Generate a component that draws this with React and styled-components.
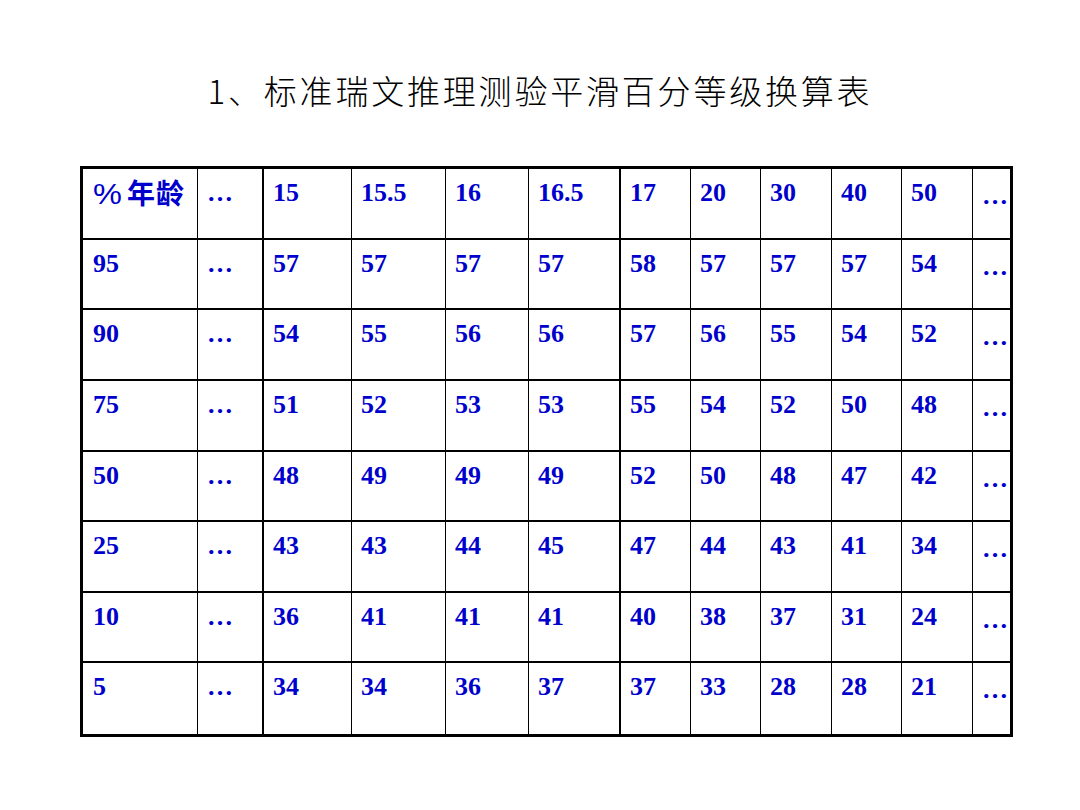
import React from "react";
import styled, { createGlobalStyle } from "styled-components";

const GlobalStyle = createGlobalStyle`
  html, body {
    margin: 0;
    padding: 0;
    background: #ffffff;
  }
`;

const Page = styled.div`
  width: 1080px;
  height: 810px;
  display: flex;
  flex-direction: column;
  align-items: flex-start;
`;

const Title = styled.h1`
  align-self: stretch;
  margin: 70px 0 0;
  height: 40px;
  line-height: 40px;
  text-align: center;
  font-family: "Noto Sans CJK SC", sans-serif;
  font-weight: 300;
  font-size: 33px;
  letter-spacing: 2.8px;
  color: #000000;
`;

const Grid = styled.div`
  box-sizing: border-box;
  margin: 56px 0 0 80px;
  width: 933px;
  height: 571px;
  border: 3px solid #000;
  display: grid;
  grid-template-columns: 115px 66px 88px 94px 83px 92px 70px 70px 71px 70px 71px 1fr;
  grid-template-rows: repeat(8, 1fr);
`;

const Cell = styled.div`
  box-sizing: border-box;
  border-right: ${(p) => (p.$last ? "none" : `${p.$thick ? 2 : 1}px solid #000`)};
  border-bottom: ${(p) => (p.$bottom ? "none" : "2px solid #000")};
  padding: ${(p) => (p.$low ? "12px" : "9px")} 0 0 ${(p) => (p.$first ? "10px" : "9px")};
  font-family: "Liberation Serif", "Noto Sans CJK SC", serif;
  font-weight: 700;
  font-size: 26px;
  line-height: 30px;
  color: #0000cc;
  white-space: nowrap;
`;

const CjkLabel = styled.span`
  font-family: "Noto Sans CJK SC", sans-serif;
  font-weight: 700;
  font-size: 28px;
  letter-spacing: 1px;
  position: relative;
  top: -1px;
`;

const Pct = styled.span`
  display: inline-block;
  width: 34px;
  font-family: "Liberation Sans", sans-serif;
  font-weight: 400;
  font-size: 29px;
  transform: scaleX(1.12);
  transform-origin: left center;
`;

const header = [
  <CjkLabel key="h">
    <Pct>%</Pct>年龄
  </CjkLabel>,
  "…", "15", "15.5", "16", "16.5", "17", "20", "30", "40", "50", "…",
];

const rows = [
  ["95", "57", "57", "57", "57", "58", "57", "57", "57", "54"],
  ["90", "54", "55", "56", "56", "57", "56", "55", "54", "52"],
  ["75", "51", "52", "53", "53", "55", "54", "52", "50", "48"],
  ["50", "48", "49", "49", "49", "52", "50", "48", "47", "42"],
  ["25", "43", "43", "44", "45", "47", "44", "43", "41", "34"],
  ["10", "36", "41", "41", "41", "40", "38", "37", "31", "24"],
  ["5", "34", "34", "36", "37", "37", "33", "28", "28", "21"],
];

const allRows = [header, ...rows.map((r) => [r[0], "…", ...r.slice(1), "…"])];

export default function App() {
  return (
    <Page>
      <GlobalStyle />
      <Title>1、标准瑞文推理测验平滑百分等级换算表</Title>
      <Grid>
        {allRows.map((row, ri) =>
          row.map((text, ci) => (
            <Cell
              key={`${ri}-${ci}`}
              $first={ci === 0}
              $thick={ci === 1 || ci === 5}
              $last={ci === row.length - 1}
              $low={ci === row.length - 1}
              $bottom={ri === allRows.length - 1}
            >
              {text}
            </Cell>
          ))
        )}
      </Grid>
    </Page>
  );
}
